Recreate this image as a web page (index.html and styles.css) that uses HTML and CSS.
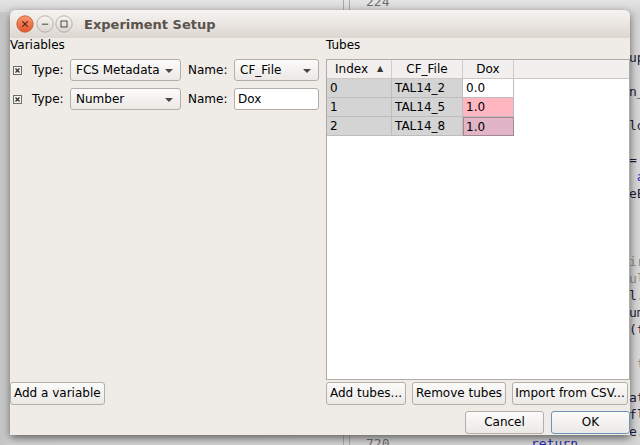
FILE: index.html
```html
<!DOCTYPE html>
<html>
<head>
<meta charset="utf-8">
<title>Experiment Setup</title>
<link rel="stylesheet" href="styles.css">
</head>
<body>
<div class="desktop">
  <div class="editor">
    <div class="top-strip"></div>
    <div class="gutter-line g1"></div>
    <div class="gutter-line g2"></div>
    <span class="lnum lnum-top">224</span>
    <span class="lnum lnum-bottom">720</span>
    <span class="kw-return">return</span>
<pre class="code"><span class="c-id">up</span>

<span class="c-id">n_</span>

<span class="c-id">lo</span>

<span class="c-id">= </span>
<span class="c-kw"> a</span>
<span class="c-id">eE</span>



<span class="c-cm">ir</span>
<span class="c-cm">ul</span>
<span class="c-id">l.</span>
<span class="c-id">um</span>
<span class="c-id">(t</span>

<span class="c-cm"> t</span>

<span class="c-id">at</span>
<span class="c-id">fl</span>
<span class="c-id">e.</span></pre>
  </div>

  <div class="dialog">
    <div class="titlebar">
      <div class="wbtns">
        <svg class="wbtn" width="18" height="18" viewBox="0 0 18 18">
          <defs>
            <linearGradient id="gclose" x1="0" y1="0" x2="0" y2="1">
              <stop offset="0" stop-color="#f79a72"/>
              <stop offset="1" stop-color="#e2552a"/>
            </linearGradient>
          </defs>
          <circle cx="9" cy="9" r="8.2" fill="url(#gclose)" stroke="#c8532e" stroke-width="0.8"/>
          <path d="M6.6 6.6 L11.4 11.4 M11.4 6.6 L6.6 11.4" stroke="#5c2415" stroke-width="1.2" stroke-linecap="round"/>
        </svg>
        <svg class="wbtn" width="18" height="18" viewBox="0 0 18 18">
          <defs>
            <linearGradient id="gmin" x1="0" y1="0" x2="0" y2="1">
              <stop offset="0" stop-color="#f7f6f4"/>
              <stop offset="1" stop-color="#d8d3cd"/>
            </linearGradient>
          </defs>
          <circle cx="9" cy="9" r="8.2" fill="url(#gmin)" stroke="#aca59e" stroke-width="0.8"/>
          <path d="M5.8 9.2 H12.2" stroke="#5b544f" stroke-width="1.1"/>
        </svg>
        <svg class="wbtn" width="18" height="18" viewBox="0 0 18 18">
          <circle cx="9" cy="9" r="8.2" fill="url(#gmin)" stroke="#aca59e" stroke-width="0.8"/>
          <rect x="6" y="6" width="6" height="6" fill="none" stroke="#5b544f" stroke-width="1.1"/>
        </svg>
      </div>
      <span class="title">Experiment Setup</span>
    </div>

    <div class="content">
      <div class="columns">
        <section class="col col-vars">
          <div class="group-label">Variables</div>
          <div class="var-list">
            <div class="var-row">
              <span class="remove-box"><svg width="9" height="9" viewBox="0 0 9 9"><rect x="0.5" y="0.5" width="8" height="8" fill="#f4f3f1" stroke="#6f6a66"/><path d="M2.5 2.5 L6.5 6.5 M6.5 2.5 L2.5 6.5" stroke="#2e2b29" stroke-width="1.2"/></svg></span>
              <span class="lbl lbl-type">Type:</span>
              <span class="combo combo-type">FCS Metadata<span class="arrow"></span></span>
              <span class="lbl lbl-name">Name:</span>
              <span class="combo combo-name">CF_File<span class="arrow"></span></span>
            </div>
            <div class="var-row">
              <span class="remove-box"><svg width="9" height="9" viewBox="0 0 9 9"><rect x="0.5" y="0.5" width="8" height="8" fill="#f4f3f1" stroke="#6f6a66"/><path d="M2.5 2.5 L6.5 6.5 M6.5 2.5 L2.5 6.5" stroke="#2e2b29" stroke-width="1.2"/></svg></span>
              <span class="lbl lbl-type">Type:</span>
              <span class="combo combo-type">Number<span class="arrow"></span></span>
              <span class="lbl lbl-name">Name:</span>
              <span class="line-edit">Dox</span>
            </div>
          </div>
          <div class="btn-row">
            <span class="btn">Add a variable</span>
          </div>
        </section>

        <section class="col col-tubes">
          <div class="group-label">Tubes</div>
          <div class="table">
            <div class="trow thead">
              <span class="hcell c-index">Index<span class="sort">&#9650;</span></span>
              <span class="hcell c-file">CF_File</span>
              <span class="hcell c-dox">Dox</span>
              <span class="hcell c-fill"></span>
            </div>
            <div class="trow">
              <span class="cell ro c-index">0</span>
              <span class="cell ro c-file">TAL14_2</span>
              <span class="cell c-dox">0.0</span>
            </div>
            <div class="trow">
              <span class="cell ro c-index">1</span>
              <span class="cell ro c-file">TAL14_5</span>
              <span class="cell c-dox pink">1.0</span>
            </div>
            <div class="trow">
              <span class="cell ro c-index">2</span>
              <span class="cell ro c-file">TAL14_8</span>
              <span class="cell c-dox pink-sel">1.0</span>
            </div>
          </div>
          <div class="btn-row">
            <span class="btn btn-add">Add tubes...</span>
            <span class="btn btn-remove">Remove tubes</span>
            <span class="btn btn-import">Import from CSV...</span>
          </div>
        </section>
      </div>

      <div class="dialog-buttons">
        <span class="btn btn-wide">Cancel</span>
        <span class="btn btn-wide btn-default">OK</span>
      </div>
    </div>
  </div>
</div>
</body>
</html>
```

FILE: styles.css
```css
* {
  box-sizing: border-box;
}

html, body {
  margin: 0;
  padding: 0;
}

body {
  width: 640px;
  height: 445px;
  overflow: hidden;
  font-family: "DejaVu Sans", "Liberation Sans", sans-serif;
  font-size: 12px;
  color: #000;
}

.desktop {
  position: relative;
  width: 640px;
  height: 445px;
  background: #cfcfcf;
  overflow: hidden;
}

/* background editor window */
.editor {
  position: absolute;
  inset: 0;
  background: linear-gradient(90deg, #c4c4c4 0px, #d2d2d2 10px, #d4d4d4 620px, #d6d6d6 640px);
}

.top-strip {
  position: absolute;
  left: 0;
  top: 0;
  width: 640px;
  height: 12px;
  background: linear-gradient(180deg, #e4e4e4, #d6d6d6);
}

.gutter-line {
  position: absolute;
  top: 0;
  width: 1px;
  height: 445px;
  background: #a9a9a9;
}

.g1 { left: 343px; }
.g2 { left: 349px; }

.lnum {
  position: absolute;
  left: 366px;
  font-family: "DejaVu Sans Mono", monospace;
  font-size: 13px;
  color: #6e6e6e;
  line-height: 16px;
}

.lnum-top { top: -6px; }
.lnum-bottom { top: 436px; }

.kw-return {
  position: absolute;
  left: 531px;
  top: 436px;
  font-family: "DejaVu Sans Mono", monospace;
  font-size: 13px;
  line-height: 16px;
  color: #2a2aa8;
}

.code {
  position: absolute;
  left: 629px;
  top: 49px;
  margin: 0;
  font-family: "DejaVu Sans Mono", monospace;
  font-size: 13px;
  line-height: 17px;
  color: #1d1d3a;
}

.c-kw { color: #2727c4; }
.c-cm { color: #8c8c8c; }

/* dialog */
.dialog {
  position: absolute;
  left: 10px;
  top: 10px;
  width: 620px;
  height: 425px;
  border-radius: 6px 6px 0 0;
  background: #efebe7;
  box-shadow: 0 3px 9px rgba(0, 0, 0, 0.55);
  display: flex;
  flex-direction: column;
}

.titlebar {
  height: 28px;
  flex: none;
  border-radius: 6px 6px 0 0;
  background: linear-gradient(180deg, #f5f3f1 0%, #ebe7e3 45%, #ddd6d0 100%);
  display: flex;
  align-items: center;
  padding-left: 6px;
}

.wbtns {
  display: flex;
  gap: 1.5px;
}

.wbtn {
  display: block;
}

.title {
  margin-left: 11px;
  font-weight: bold;
  font-size: 13px;
  color: #5a534d;
  margin-top: 1px;
}

.content {
  flex: 1;
  display: flex;
  flex-direction: column;
}

.columns {
  display: flex;
  gap: 6px;
  height: 367px;
}

.col {
  display: flex;
  flex-direction: column;
}

.col-vars {
  width: 310px;
}

.col-tubes {
  width: 304px;
}

.group-label {
  height: 21px;
  line-height: 15px;
  flex: none;
}

.var-list {
  flex: 1;
  display: flex;
  flex-direction: column;
  gap: 7px;
}

.var-row {
  display: flex;
  align-items: center;
  height: 22px;
}

.remove-box {
  width: 9px;
  height: 9px;
  margin-left: 3px;
  display: flex;
}

.lbl {
  line-height: 15px;
  white-space: nowrap;
}

.lbl-type {
  margin-left: 10px;
  width: 38px;
}

.lbl-name {
  margin-left: 7px;
  width: 46px;
}

.combo {
  position: relative;
  height: 22px;
  border: 1px solid #b4aea8;
  border-radius: 3px;
  background: linear-gradient(180deg, #fcfcfb, #ebe8e5);
  line-height: 20px;
  padding-left: 5px;
  white-space: nowrap;
}

.combo-type {
  width: 111px;
}

.combo-name {
  width: 85px;
}

.arrow {
  position: absolute;
  right: 7px;
  top: 9px;
  width: 0;
  height: 0;
  border-left: 4px solid transparent;
  border-right: 4px solid transparent;
  border-top: 4px solid #4a4541;
}

.line-edit {
  width: 85px;
  height: 22px;
  border: 1px solid #b4aea8;
  border-radius: 3px;
  background: #fff;
  line-height: 20px;
  padding-left: 3px;
}

.btn-row {
  display: flex;
  gap: 6px;
  margin-top: 2px;
  height: 23px;
  flex: none;
}

.btn {
  height: 23px;
  border: 1px solid #b4aea8;
  border-radius: 3px;
  background: linear-gradient(180deg, #fbfbfa, #ebe9e6);
  line-height: 21px;
  padding: 0 3px;
  white-space: nowrap;
  text-align: center;
}

.btn-add { width: 80px; padding: 0; }
.btn-remove { width: 94px; padding: 0; }
.btn-import { width: 116px; padding: 0; }

/* table */
.table {
  flex: 1;
  border: 1px solid #b0aba5;
  background: #fff;
  overflow: hidden;
}

.trow {
  display: flex;
  height: 19px;
}

.thead {
  height: 19px;
  background: #f2f0ee;
  border-bottom: 1px solid #cdc8c2;
}

.hcell {
  height: 18px;
  line-height: 18px;
  border-right: 1px solid #d2cdc8;
  text-align: center;
  white-space: nowrap;
}

.hcell.c-fill {
  flex: 1;
  border-right: none;
}

.hcell.c-index {
  display: flex;
  justify-content: flex-start;
  padding-left: 8px;
}

.sort {
  font-size: 8px;
  margin-left: 9px;
  color: #3a3633;
  line-height: 17px;
}

.c-index { width: 65px; }
.c-file { width: 71px; }
.c-dox { width: 51px; }

.cell {
  height: 19px;
  line-height: 18px;
  padding-left: 3px;
  border-right: 1px solid #bdbdbd;
  border-bottom: 1px solid #bdbdbd;
  white-space: nowrap;
}

.cell.ro {
  background: #d4d4d4;
}

.cell.pink {
  background: #ffb6c1;
}

.cell.pink-sel {
  background: #e1b5c5;
  border: 1px solid #a68796;
  padding-left: 2px;
}

.dialog-buttons {
  display: flex;
  justify-content: flex-end;
  gap: 7px;
  margin-top: 6px;
}

.btn-wide {
  width: 79px;
}

.btn-default {
  border-color: #6f93b5;
}
```
